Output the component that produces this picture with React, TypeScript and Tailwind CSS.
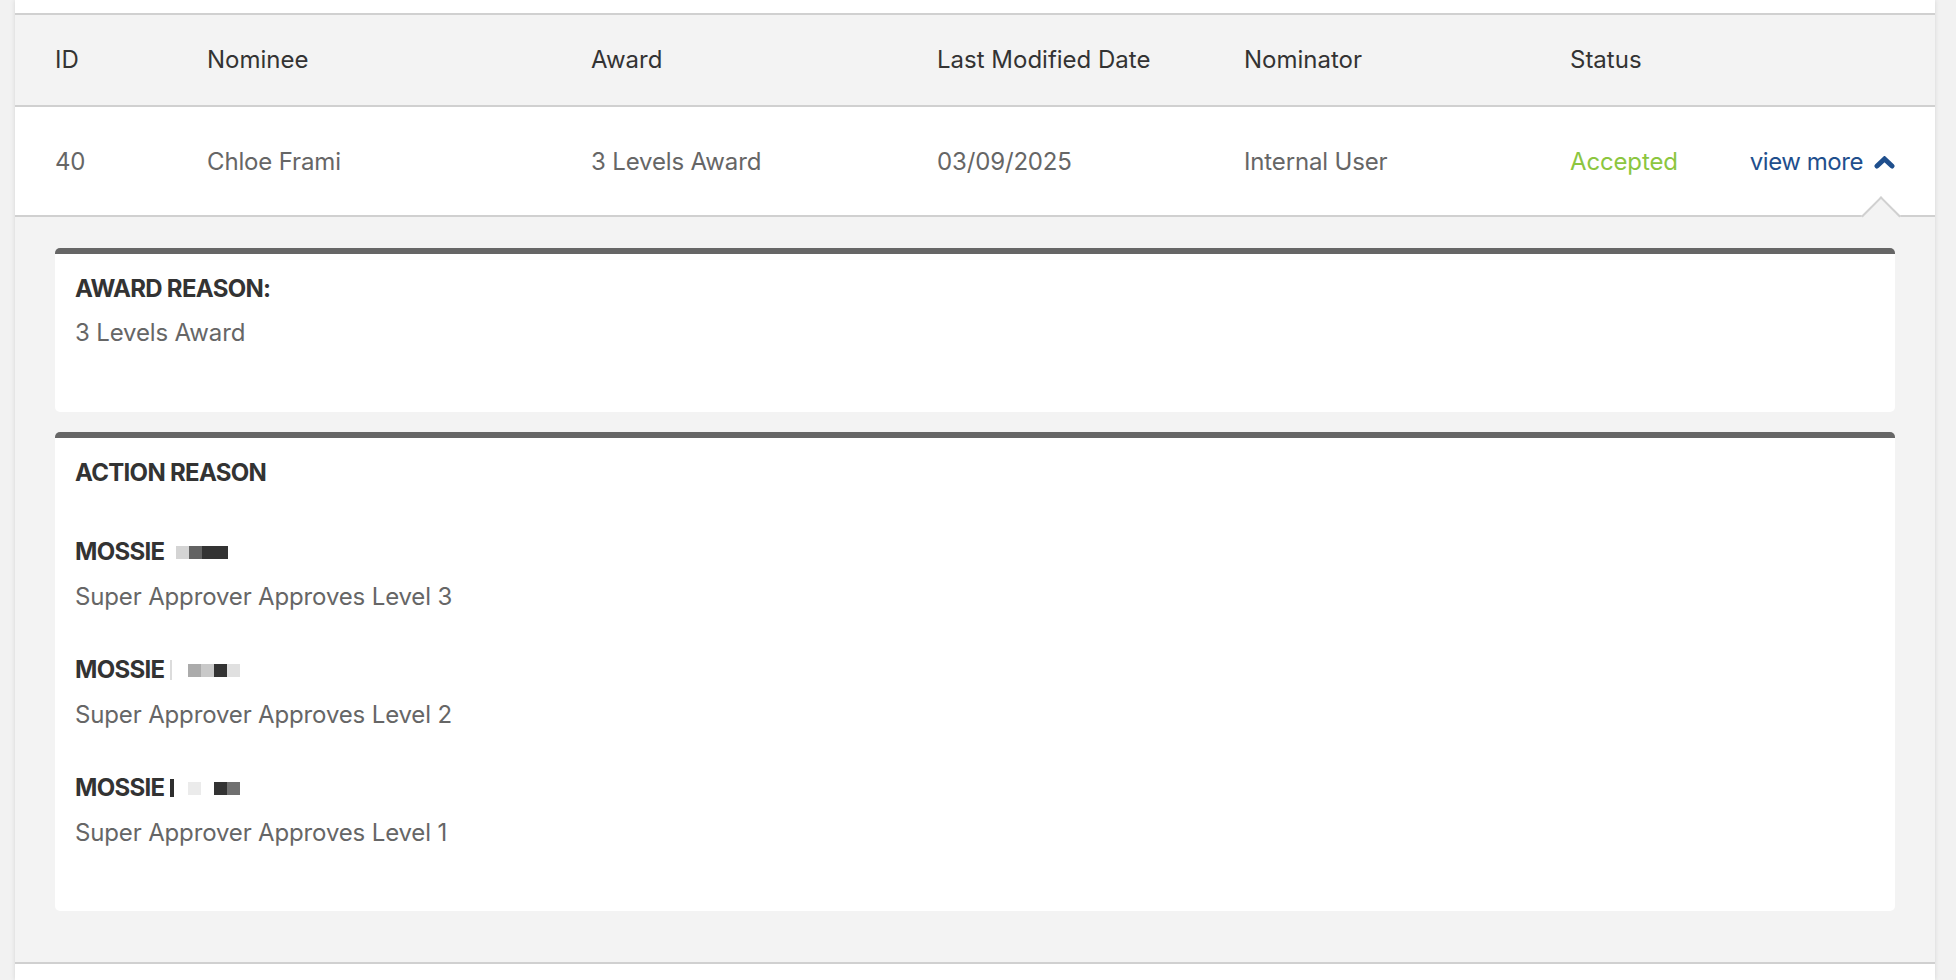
import React from "react";

const Block = ({ c, w = 13 }: { c: string; w?: number }) => (
  <span className="inline-block h-[13px]" style={{ width: w, backgroundColor: c }} />
);

function ChevronUp() {
  return (
    <svg width="21" height="13" viewBox="0 0 21 13" className="ml-[11px]">
      <polyline
        points="3,10 10.5,3 18,10"
        fill="none"
        stroke="#1f4f8d"
        strokeWidth="5"
        strokeLinecap="round"
        strokeLinejoin="miter"
      />
    </svg>
  );
}

export default function App() {
  const groups = [
    {
      level: 3,
      extra: (
        <span className="ml-[12px] flex">
          <Block c="#d4d4d4" />
          <Block c="#636363" />
          <Block c="#333333" w={26} />
        </span>
      ),
    },
    {
      level: 2,
      extra: (
        <span className="ml-[6px] flex items-center">
          <span className="inline-block h-[20px] w-[2px] bg-[#dcdcdc]" />
          <span className="ml-[16px] flex">
            <Block c="#ababab" />
            <Block c="#c9c9c9" />
            <Block c="#333333" />
            <Block c="#e0e0e0" />
          </span>
        </span>
      ),
    },
    {
      level: 1,
      extra: (
        <span className="ml-[6px] flex items-center">
          <span className="inline-block h-[18px] w-[4px] bg-[#2e2e2e]" />
          <span className="ml-[14px] flex">
            <Block c="#ebebeb" />
            <Block c="transparent" />
            <Block c="#333333" />
            <Block c="#707070" />
          </span>
        </span>
      ),
    },
  ];

  return (
    <div className="min-h-screen bg-[#f2f2f2] font-['Inter','Open_Sans',sans-serif] text-[24px]">
      <div className="ml-[15px] min-h-[980px] w-[1920px] bg-white shadow-[0_0_5px_rgba(0,0,0,0.12)]">
        <div className="h-[13px]" />
        {/* Header */}
        <div className="grid h-[94px] grid-cols-[152px_384px_346px_307px_326px_1fr] items-center border-y-2 border-[#d0d0d0] bg-[#f3f3f3] px-[40px] text-[#333333]">
          <div>ID</div>
          <div>Nominee</div>
          <div>Award</div>
          <div>Last Modified Date</div>
          <div>Nominator</div>
          <div>Status</div>
        </div>
        {/* Row */}
        <div className="grid h-[110px] grid-cols-[152px_384px_346px_307px_326px_1fr] items-center border-b-2 border-[#d0d0d0] bg-white px-[40px] pt-[2px] tracking-[-0.15px] text-[#666666]">
          <div>40</div>
          <div>Chloe Frami</div>
          <div>3 Levels Award</div>
          <div>03/09/2025</div>
          <div>Internal User</div>
          <div className="flex items-center justify-between">
            <span className="text-[#8cc63f]">Accepted</span>
            <span className="flex items-center tracking-[-0.45px] text-[#1f4f8d]">
              view more
              <ChevronUp />
            </span>
          </div>
        </div>
        {/* Expanded */}
        <div className="relative border-b-2 border-[#d0d0d0] bg-[#f3f3f3] px-[40px] pt-[31px] pb-[51px]">
          <div className="absolute left-[1852px] top-[-15px] h-[28px] w-[28px] rotate-45 border-l-2 border-t-2 border-[#d0d0d0] bg-[#f3f3f3]" />
          <div className="rounded-[5px] border-t-[6px] border-[#666666] bg-white px-[20px] pt-[17px] pb-[61px]">
            <div className="h-[36px] leading-[36px] font-bold tracking-[-0.7px] text-[#333333]">AWARD REASON:</div>
            <div className="mt-[8px] h-[36px] leading-[36px] tracking-[-0.15px] text-[#666666]">3 Levels Award</div>
          </div>
          <div className="mt-[20px] rounded-[5px] border-t-[6px] border-[#666666] bg-white px-[20px] pt-[17px] pb-[60px]">
            <div className="h-[36px] leading-[36px] font-bold tracking-[-0.7px] text-[#333333]">ACTION REASON</div>
            {groups.map((g, i) => (
              <div key={g.level} className={i === 0 ? "mt-[43px]" : "mt-[37px]"}>
                <div className="flex h-[36px] items-center leading-[36px] font-bold tracking-[-0.7px] text-[#333333]">
                  <span>MOSSIE</span>
                  {g.extra}
                </div>
                <div className="mt-[9px] h-[36px] leading-[36px] tracking-[-0.15px] text-[#666666]">
                  Super Approver Approves Level {g.level}
                </div>
              </div>
            ))}
          </div>
        </div>
      </div>
    </div>
  );
}
